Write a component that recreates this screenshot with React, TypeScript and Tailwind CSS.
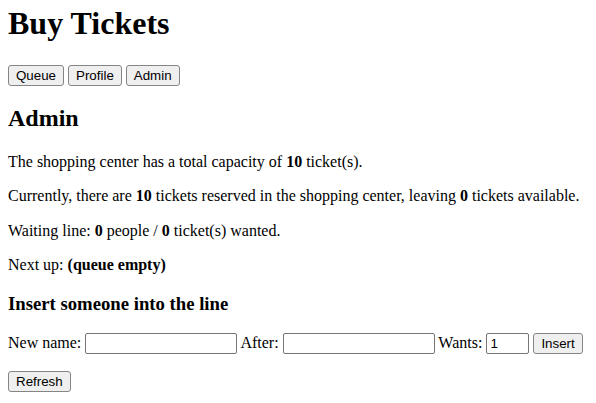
import React from 'react'

const btn =
  "inline-block h-[21px] px-[7px] align-baseline rounded-[3px] border border-[#858585] bg-[#efefef] font-['Liberation_Sans',Arial,sans-serif] text-[13.33px] leading-[17px] text-black"

const field =
  "inline-block h-[21px] px-[3px] align-baseline rounded-[2px] border border-[#767676] bg-white font-['Liberation_Sans',Arial,sans-serif] text-[13.33px] text-black outline-none"

export default function App() {
  return (
    <div className="min-h-screen bg-white px-2 text-black font-['Liberation_Serif','Times_New_Roman',serif] text-[16px] leading-[1.15]">
      <h1 className="mt-[5px] mb-[21.44px] text-[32px] font-bold leading-[1.15]">Buy Tickets</h1>

      <div className="leading-[23px]">
        <button className={btn}>Queue</button>{' '}
        <button className={btn}>Profile</button>{' '}
        <button className={`${btn} bg-[#e4e4e4] border-[#555555]`}>Admin</button>
      </div>

      <h2 className="mt-[19px] mb-[19.92px] text-[24px] font-bold leading-[1.15]">Admin</h2>

      <p className="my-4">
        The shopping center has a total capacity of <b>10</b> ticket(s).
      </p>
      <p className="my-4">
        Currently, there are <b>10</b> tickets reserved in the shopping center, leaving <b>0</b> tickets available.
      </p>
      <p className="my-4">
        Waiting line: <b>0</b> people / <b>0</b> ticket(s) wanted.
      </p>
      <p className="my-4">
        Next up: <b>(queue empty)</b>
      </p>

      <h3 className="mt-[18.72px] mb-[17px] text-[18.72px] font-bold leading-[1.15]">Insert someone into the line</h3>

      <form className="my-4 leading-[21px]" onSubmit={e => e.preventDefault()}>
        New name: <input type="text" className={`${field} w-[152px]`} />{' '}
        After: <input type="text" className={`${field} w-[152px]`} />{' '}
        Wants: <input type="text" defaultValue="1" className={`${field} w-[43px]`} />{' '}
        <button type="submit" className={btn}>Insert</button>
      </form>

      <div className="mt-[14px] leading-[21px]">
        <button className={btn}>Refresh</button>
      </div>
    </div>
  )
}
